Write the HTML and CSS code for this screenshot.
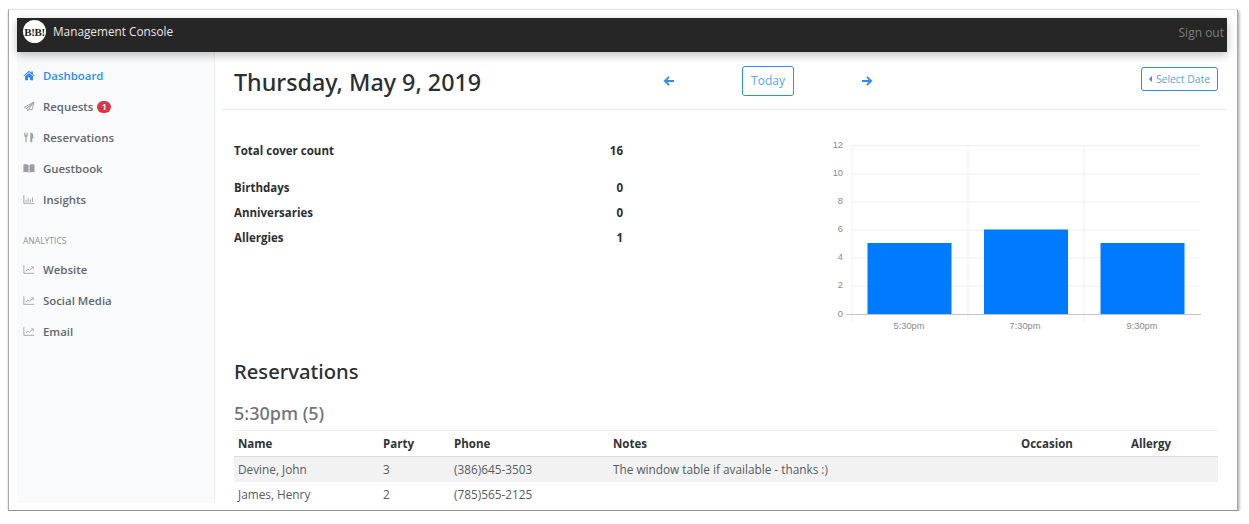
FILE: index.html
```html
<!DOCTYPE html>
<html>
<head>
<title>Management Console</title>
<link rel="stylesheet" href="styles.css">
</head>
<body>

<div class="frame">

	<nav class="topbar">
		<div class="brand">
			<span class="logo">B!B!</span>
			<span class="brand-name">Management Console</span>
		</div>
		<a class="signout">Sign out</a>
	</nav>

	<div class="columns">

		<aside class="sidebar">
			<a class="nav-item active">
				<svg class="nav-icon" viewBox="0 0 14 12"><path d="M7 .6 .3 6.200l.7.8L7 2.100 13 7l.7-.8-2.200-1.800V1.300H9.700v1.600zM2.300 7v4.600h3.500V8.300h2.400v3.300h3.500V7L7 3.200z"/></svg>
				Dashboard
			</a>
			<a class="nav-item">
				<svg class="nav-icon line" viewBox="0 0 14 12"><path d="M12.800.8 1.500 6.800l3 1.200zM12.800.8 10.500 10 7 8.700 5.500 11 4.500 8zM7 8.700 12.800.8"/></svg>
				Requests <span class="badge">1</span>
			</a>
			<a class="nav-item">
				<svg class="nav-icon" viewBox="0 0 14 12"><path d="M1.500.5h.9v3h.7v-3h.8v3h.7v-3h.9v4l-1.300 1v6H2.800v-6l-1.300-1zM8.500.5c2.500 0 3.500 1.500 3.500 3.500v3h-1.200v4.500H8.500z"/></svg>
				Reservations
			</a>
			<a class="nav-item">
				<svg class="nav-icon" viewBox="0 0 14 12"><path d="M.5 1.500c2-.7 4.500-.7 6 .3v9c-1.500-.8-4-.8-6-.2zM13.500 1.500c-2-.7-4.500-.7-6 .3v9c1.500-.8 4-.8 6-.2z"/></svg>
				Guestbook
			</a>
			<a class="nav-item">
				<svg class="nav-icon line" viewBox="0 0 14 12"><path d="M1 1v9.500h12M3.500 9V6.500M6 9V4.500M8.500 9V6M11 9V3.500"/></svg>
				Insights
			</a>

			<div class="nav-label">ANALYTICS</div>

			<a class="nav-item">
				<svg class="nav-icon line" viewBox="0 0 14 12"><path d="M1 1v9.500h12M3 8l2.500-2.500L7.500 7 11 3.500M9.500 3H12v2.500"/></svg>
				Website
			</a>
			<a class="nav-item">
				<svg class="nav-icon line" viewBox="0 0 14 12"><path d="M1 1v9.500h12M3 8l2.500-2.500L7.500 7 11 3.500M9.500 3H12v2.500"/></svg>
				Social Media
			</a>
			<a class="nav-item">
				<svg class="nav-icon line" viewBox="0 0 14 12"><path d="M1 1v9.500h12M3 8l2.500-2.500L7.500 7 11 3.500M9.500 3H12v2.500"/></svg>
				Email
			</a>
		</aside>

		<main class="content">

			<header class="day-header">
				<h1 class="day-title">Thursday, May 9, 2019</h1>
				<div class="day-nav">
					<svg class="arrow" viewBox="0 0 12 12"><path d="M11 6H2M6 1.800 1.800 6 6 10.200"/></svg>
					<a class="btn btn-today">Today</a>
					<svg class="arrow" viewBox="0 0 12 12"><path d="M1 6h9M6 1.800 10.200 6 6 10.200"/></svg>
				</div>
				<a class="btn btn-date"><span class="caret"></span>Select Date</a>
			</header>

			<section class="summary">
				<div class="stats">
					<div class="stat stat-total"><span>Total cover count</span><span>16</span></div>
					<div class="stat"><span>Birthdays</span><span>0</span></div>
					<div class="stat"><span>Anniversaries</span><span>0</span></div>
					<div class="stat"><span>Allergies</span><span>1</span></div>
				</div>

				<svg class="chart" viewBox="0 0 400 210" width="400" height="210">
					<path class="grid" d="M32 15.500H380M32 44H380M32 72H380M32 100H380M32 128H380M32 156H380M32 15V191M148 15V191M264 15V191"/>
					<rect class="bar" x="47.500" y="113" width="84" height="71"/>
					<rect class="bar" x="164" y="99.500" width="84" height="84.500"/>
					<rect class="bar" x="280.500" y="113" width="84" height="71"/>
					<path class="axis" d="M26 184.500H381"/>
					<g class="ticks">
						<text x="23" y="18">12</text>
						<text x="23" y="46">10</text>
						<text x="23" y="74">8</text>
						<text x="23" y="102">6</text>
						<text x="23" y="130">4</text>
						<text x="23" y="158">2</text>
						<text x="23" y="187">0</text>
					</g>
					<g class="labels">
						<text x="89" y="199">5:30pm</text>
						<text x="205" y="199">7:30pm</text>
						<text x="322" y="199">9:30pm</text>
					</g>
				</svg>
			</section>

			<h2 class="section-title">Reservations</h2>
			<h3 class="slot-title">5:30pm (5)</h3>

			<table class="res-table">
				<thead>
					<tr>
						<th class="col-name">Name</th>
						<th class="col-party">Party</th>
						<th class="col-phone">Phone</th>
						<th class="col-notes">Notes</th>
						<th class="col-occasion">Occasion</th>
						<th>Allergy</th>
					</tr>
				</thead>
				<tbody>
					<tr class="odd">
						<td>Devine, John</td>
						<td>3</td>
						<td>(386)645-3503</td>
						<td>The window table if available - thanks :)</td>
						<td></td>
						<td></td>
					</tr>
					<tr>
						<td>James, Henry</td>
						<td>2</td>
						<td>(785)565-2125</td>
						<td></td>
						<td></td>
						<td></td>
					</tr>
				</tbody>
			</table>

		</main>
	</div>
</div>

</body>
</html>
```

FILE: styles.css
```css
* {
	box-sizing: border-box;
}

body {
	margin: 0;
	background-color: #fff;
	font-family: "Open Sans", "Noto Sans", sans-serif;
	font-size: 12px;
	color: #343a40;
}

.frame {
	width: 1230px;
	height: 502px;
	margin: 9px 0 0 8px;
	padding: 8px 10px 7px 8px;
	background-color: #fff;
	border: 1px solid #e4e4e4;
	border-left-color: #a8a8a8;
	border-right-color: #a8a8a8;
	border-bottom-color: #8f8f8f;
	box-shadow: 1px 2px 3px rgba(0, 0, 0, .4);
	display: flex;
	flex-direction: column;
}

.topbar {
	height: 34px;
	flex: none;
	display: flex;
	align-items: center;
	justify-content: space-between;
	padding: 0 3px 7px 6px;
	background-color: #262626;
	box-shadow: 0 3px 9px rgba(0, 0, 0, .25);
	position: relative;
}

.brand {
	display: flex;
	align-items: center;
	gap: 7px;
}

.logo {
	width: 23px;
	height: 23px;
	border-radius: 50%;
	background-color: #fff;
	color: #222;
	font-family: "Liberation Serif", serif;
	font-weight: bold;
	font-size: 11px;
	letter-spacing: -.4px;
	display: flex;
	align-items: center;
	justify-content: center;
}

.brand-name {
	margin-bottom: 2px;
	font-size: 11.800px;
	color: #e8e8e8;
}

.signout {
	margin-top: 1px;
	font-size: 12px;
	color: #7d7d7d;
}

.columns {
	flex: 1;
	display: flex;
	min-height: 0;
}

.sidebar {
	width: 198px;
	flex: none;
	padding-top: 8px;
	background-color: #f9fafc;
	border-right: 1px solid #f0f0f0;
}

.nav-item {
	height: 31px;
	display: flex;
	align-items: center;
	padding-left: 6px;
	font-size: 11.400px;
	font-weight: 600;
	color: #62676e;
}

.nav-item.active {
	color: #2f8cf5;
}

.nav-icon {
	width: 12px;
	height: 11px;
	margin-right: 8px;
	fill: currentColor;
	color: #9b9ea3;
}

.nav-icon.line {
	fill: none;
	stroke: currentColor;
	stroke-width: 1;
}

.active .nav-icon {
	color: #2f8cf5;
}

.badge {
	margin-left: 4px;
	width: 14px;
	height: 12px;
	border-radius: 6px;
	background-color: #dc3545;
	color: #fff;
	font-size: 8px;
	font-weight: bold;
	display: flex;
	align-items: center;
	justify-content: center;
}

.nav-label {
	height: 25px;
	margin-top: 14px;
	padding-left: 6px;
	font-size: 8.500px;
	line-height: 24px;
	color: #8d9196;
}

.content {
	flex: 1;
	min-width: 0;
	overflow: hidden;
	padding-left: 7px;
}

.day-header {
	height: 58px;
	display: flex;
	align-items: center;
	padding: 0 9px 0 12px;
	border-bottom: 1px solid #e9ecef;
}

.day-title {
	width: 429px;
	margin: 2px 0 0;
	font-family: "Noto Sans", sans-serif;
	font-size: 23.300px;
	font-weight: 500;
	color: #2a2f33;
}

.day-nav {
	display: flex;
	align-items: center;
}

.arrow {
	width: 12px;
	height: 12px;
	fill: none;
	stroke: #2f8cf5;
	stroke-width: 1.800;
}

.btn {
	border: 1px solid #2f8cf5;
	border-radius: 3px;
	color: #5ba4f5;
	display: flex;
	align-items: center;
	justify-content: center;
}

.btn-today {
	width: 52px;
	height: 30px;
	margin: 0 67px;
	font-size: 12px;
}

.btn-date {
	width: 77px;
	height: 24px;
	margin-left: auto;
	margin-top: -3px;
	font-size: 10.400px;
}

.caret {
	margin-right: 4px;
	border-top: 3px solid transparent;
	border-bottom: 3px solid transparent;
	border-right: 3px solid #2f8cf5;
}

.summary {
	height: 248px;
	display: flex;
	justify-content: space-between;
	padding: 20px 7px 0 12px;
}

.stats {
	width: 389px;
	padding-top: 8px;
}

.stat {
	height: 25px;
	display: flex;
	align-items: center;
	justify-content: space-between;
	font-weight: 700;
	font-size: 11.500px;
	color: #2b2f33;
}

.stat-total {
	margin-bottom: 12px;
}

.chart {
	flex: none;
}

.grid {
	fill: none;
	stroke: #efefef;
}

.bar {
	fill: #007bff;
}

.axis {
	fill: none;
	stroke: #c4c4c4;
}

.ticks text,
.labels text {
	font-family: "Liberation Sans", sans-serif;
	font-size: 9.300px;
	fill: #8a8a8a;
}

.ticks text {
	text-anchor: end;
}

.labels text {
	text-anchor: middle;
}

.section-title {
	margin: 0 0 0 12px;
	height: 43px;
	font-family: "Noto Sans", sans-serif;
	font-size: 20.200px;
	font-weight: 500;
	line-height: 27px;
	color: #2a2f33;
}

.slot-title {
	margin: 0 0 0 12px;
	height: 29px;
	font-family: "Noto Sans", sans-serif;
	font-size: 18px;
	font-weight: 500;
	line-height: 25px;
	color: #6c757d;
}

.res-table {
	width: 984px;
	margin-left: 12px;
	border-collapse: collapse;
	table-layout: fixed;
	font-size: 11.800px;
}

.res-table th {
	height: 26px;
	padding: 0 4px;
	text-align: left;
	font-size: 11.500px;
	font-weight: 700;
	color: #2f3438;
	border-top: 1px solid #ececec;
	border-bottom: 1px solid #dcdcdc;
}

.res-table td {
	height: 25px;
	padding: 0 4px;
	color: #565b60;
}

.odd td {
	background-color: #f2f2f2;
}

.col-name {
	width: 145px;
}

.col-party {
	width: 71px;
}

.col-phone {
	width: 159px;
}

.col-notes {
	width: 408px;
}

.col-occasion {
	width: 110px;
}
```
